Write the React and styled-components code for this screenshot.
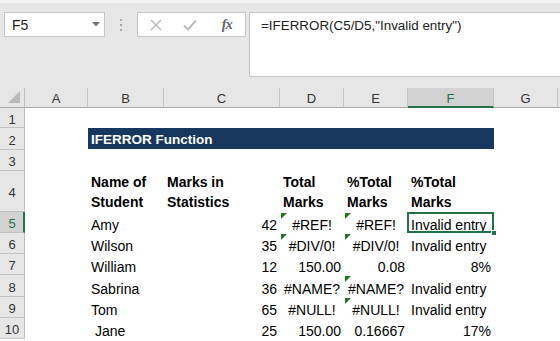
import React from 'react';
import styled, { createGlobalStyle, css } from 'styled-components';

const Global = createGlobalStyle`
  html, body { margin: 0; padding: 0; background: #ffffff; }
  body { font-family: "Liberation Sans", Arial, sans-serif; }
  * { box-sizing: border-box; }
`;

const Frame = styled.div`
  width: 560px;
  height: 341px;
  overflow: hidden;
  background: #ffffff;
`;

const Toolbar = styled.div`
  height: 88px;
  background: #e6e6e6;
  border-top: 3px solid #f2f2f2;
  display: flex;
  align-items: flex-start;
  padding: 9px 0 0 4px;
`;

const NameBox = styled.div`
  width: 101px;
  height: 25px;
  background: #fff;
  border: 1px solid #c6c6c6;
  display: flex;
  align-items: center;
  justify-content: space-between;
  padding: 0 4px 0 7px;
  font-size: 14px;
  color: #222;
`;

const Grip = styled.div`
  width: 32px;
  height: 25px;
  display: flex;
  flex-direction: column;
  align-items: center;
  justify-content: center;
  gap: 3px;
  span {
    width: 2px;
    height: 2px;
    background: #a8a8a8;
  }
`;

const FxBox = styled.div`
  width: 109px;
  height: 25px;
  background: #fff;
  border: 1px solid #c6c6c6;
  display: flex;
  align-items: center;
  padding: 0 0 0 12px;
`;

const IconSlot = styled.div`
  width: ${p => p.$w}px;
  display: flex;
  justify-content: center;
  align-items: center;
`;

const FxText = styled.span`
  font-family: "Liberation Serif", "Times New Roman", serif;
  font-style: italic;
  font-weight: bold;
  font-size: 14px;
  color: #666;
  letter-spacing: -0.5px;
`;

const FormulaBox = styled.div`
  flex: 1;
  height: 65px;
  margin-left: 3px;
  background: #fff;
  border: 1px solid #c6c6c6;
  border-right: none;
  padding: 5px 0 0 11px;
  font-size: 13.4px;
  color: #222;
  white-space: pre;
`;

const Sheet = styled.div`
  display: grid;
  grid-template-columns: 25px 63px 76px 116px 64px 64px 86px 64px 1fr;
  grid-template-rows: 20px 20px 22px 21px 41px 21px 21px 21px 22px 21px 21px;
`;

const Corner = styled.div`
  background: #e6e6e6;
  border-right: 1px solid #bdbdbd;
  border-bottom: 1px solid #ababab;
  position: relative;
  &::after {
    content: '';
    position: absolute;
    right: 4px;
    bottom: 4px;
    width: 0;
    height: 0;
    border-left: 12px solid transparent;
    border-bottom: 12px solid #b9b9b9;
  }
`;

const ColHead = styled.div`
  background: ${p => (p.$active ? '#d2d2d2' : '#e6e6e6')};
  border-right: 1px solid #c4c4c4;
  border-bottom: ${p => (p.$active ? '2px solid #217346' : '1px solid #ababab')};
  display: flex;
  align-items: center;
  justify-content: center;
  font-size: 13px;
  color: ${p => (p.$active ? '#217346' : '#333')};
  padding-top: ${p => (p.$active ? '2px' : '1px')};
`;

const RowHead = styled.div`
  background: ${p => (p.$active ? '#d2d2d2' : '#e6e6e6')};
  border-right: ${p => (p.$active ? '2px solid #217346' : '1px solid #bdbdbd')};
  border-bottom: 1px solid #c4c4c4;
  display: flex;
  align-items: center;
  justify-content: center;
  font-size: 13px;
  color: ${p => (p.$active ? '#217346' : '#333')};
  padding-top: 3px;
  padding-left: ${p => (p.$active ? '1px' : '0')};
`;

const Cell = styled.div`
  position: relative;
  display: flex;
  align-items: flex-end;
  justify-content: ${p =>
    p.$align === 'right' ? 'flex-end' : p.$align === 'center' ? 'center' : 'flex-start'};
  padding: 0 3px 0 3px;
  font-size: 14px;
  line-height: ${p => (p.$wrap ? '20px' : '15px')};
  font-weight: ${p => (p.$bold ? 'bold' : 'normal')};
  color: #000;
  white-space: pre;
  ${p =>
    p.$flag &&
    css`
      &::before {
        content: '';
        position: absolute;
        left: 1px;
        top: 1px;
        width: 0;
        height: 0;
        border-top: 6px solid #1f7a1f;
        border-right: 6px solid transparent;
      }
    `}
  ${p =>
    p.$selected &&
    css`
      &::after {
        content: '';
        position: absolute;
        left: -1px;
        top: 0;
        right: 0;
        bottom: 0;
        border: 2px solid #217346;
      }
    `}
`;

const FillHandle = styled.span`
  position: absolute;
  right: -3px;
  bottom: -3px;
  width: 6px;
  height: 6px;
  background: #217346;
  border: 1px solid #fff;
  z-index: 2;
`;

const Title = styled.div`
  grid-column: span 5;
  background: #17375e;
  color: #fff;
  font-weight: bold;
  font-size: 13.5px;
  display: flex;
  align-items: center;
  padding: 2px 3px 0 3px;
  margin-bottom: 1px;
`;

const Lines = styled.span`
  display: block;
`;

const cols = ['A', 'B', 'C', 'D', 'E', 'F', 'G'];

const R = 'right';
const C = 'center';
const L = 'left';

const data = [
  ['Amy', '42', ['#REF!', C, true], ['#REF!', C, true], ['Invalid entry', L, false, true]],
  ['Wilson', '35', ['#DIV/0!', C, true], ['#DIV/0!', C, true], ['Invalid entry', L]],
  ['William', '12', ['150.00', R], ['0.08', R], ['8%', R]],
  ['Sabrina', '36', ['#NAME?', C], ['#NAME?', C, true], ['Invalid entry', L]],
  ['Tom', '65', ['#NULL!', C], ['#NULL!', C, true], ['Invalid entry', L]],
  [' Jane', '25', ['150.00', R], ['0.16667', R], ['17%', R]],
];

const headers = [
  ['Name of', 'Student'],
  ['Marks in', 'Statistics'],
  ['Total', 'Marks'],
  ['%Total', 'Marks'],
  ['%Total', 'Marks'],
];

function XIcon() {
  return (
    <svg width="12" height="12" viewBox="0 0 12 12">
      <path d="M1 1 L11 11 M11 1 L1 11" stroke="#bdbdbd" strokeWidth="1.6" fill="none" />
    </svg>
  );
}

function CheckIcon() {
  return (
    <svg width="14" height="12" viewBox="0 0 14 12">
      <path d="M1 6.5 L5 10.5 L13 1.5" stroke="#bdbdbd" strokeWidth="2" fill="none" />
    </svg>
  );
}

function Caret() {
  return (
    <svg width="8" height="5" viewBox="0 0 8 5">
      <polygon points="0,0 8,0 4,4.5" fill="#777" />
    </svg>
  );
}

function EmptyRow({ n, active }) {
  return (
    <>
      <RowHead $active={active}>{n}</RowHead>
      {cols.map(c => (
        <Cell key={c} />
      ))}
      <Cell />
    </>
  );
}

export default function App() {
  return (
    <Frame>
      <Global />
      <Toolbar>
        <NameBox>
          <span>F5</span>
          <Caret />
        </NameBox>
        <Grip>
          <span />
          <span />
          <span />
        </Grip>
        <FxBox>
          <IconSlot $w={12}>
            <XIcon />
          </IconSlot>
          <IconSlot $w={56}>
            <CheckIcon />
          </IconSlot>
          <IconSlot $w={18}>
            <FxText>fx</FxText>
          </IconSlot>
        </FxBox>
        <FormulaBox>=IFERROR(C5/D5,"Invalid entry")</FormulaBox>
      </Toolbar>
      <Sheet>
        <Corner />
        {cols.map(c => (
          <ColHead key={c} $active={c === 'F'}>
            {c}
          </ColHead>
        ))}
        <ColHead />

        <EmptyRow n={1} />

        <RowHead>2</RowHead>
        <Cell />
        <Title>IFERROR Function</Title>
        <Cell />
        <Cell />

        <EmptyRow n={3} />

        <RowHead>4</RowHead>
        <Cell />
        {headers.map((h, i) => (
          <Cell key={i} $bold $wrap>
            <Lines>
              {h[0]}
              <br />
              {h[1]}
            </Lines>
          </Cell>
        ))}
        <Cell />
        <Cell />

        {data.map((row, i) => (
          <React.Fragment key={i}>
            <RowHead $active={i === 0}>{i + 5}</RowHead>
            <Cell />
            <Cell>{row[0]}</Cell>
            <Cell $align={R}>{row[1]}</Cell>
            {row.slice(2).map((v, j) => (
              <Cell key={j} $align={v[1]} $flag={v[2]} $selected={v[3]}>
                {v[0]}
                {v[3] && <FillHandle />}
              </Cell>
            ))}
            <Cell />
            <Cell />
          </React.Fragment>
        ))}
      </Sheet>
    </Frame>
  );
}
